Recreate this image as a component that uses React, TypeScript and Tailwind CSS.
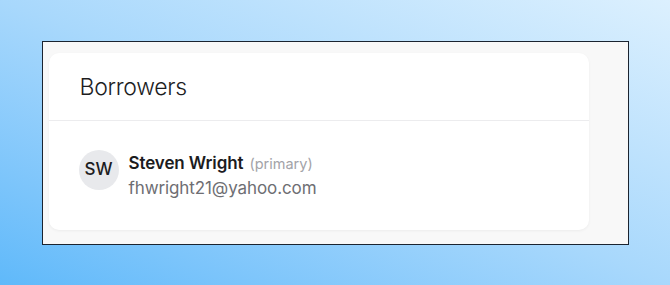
import React from 'react';

const font = { fontFamily: 'Inter, "Noto Sans", sans-serif' };

const BorrowerRow: React.FC<{ initials: string; name: string; email: string; primary?: boolean }> = ({
  initials,
  name,
  email,
  primary,
}) => (
  <div className="flex items-start gap-[10px]">
    <div className="w-10 h-10 rounded-full bg-[#e8e9ec] flex items-center justify-center text-[17px] font-medium text-[#1d1d1f] shrink-0">
      {initials}
    </div>
    <div className="pt-[1px]">
      <div className="flex items-baseline gap-[6px] leading-6">
        <span className="text-[17px] font-semibold text-[#1c1c1e] tracking-[-0.1px]">{name}</span>
        {primary && <span className="text-[14.5px] text-[#a3a3a8]">(primary)</span>}
      </div>
      <div className="text-[17px] leading-6 text-[#6e6e73] tracking-[-0.1px]">{email}</div>
    </div>
  </div>
);

export default function App() {
  return (
    <div
      className="h-[285px] w-full flex items-center justify-center bg-gradient-to-tr from-[#5fb9fa] via-[#a8d8fc] to-[#dcf0fe]"
      style={font}
    >
      <div className="w-[587px] h-[204px] border border-[#1b2430] bg-[#f8f8f8] pt-[11px] pl-[6px]">
        <div className="w-[540px] h-[177px] bg-white rounded-[10px] shadow-[0_1px_3px_rgba(0,0,0,0.05)]">
          <div className="h-[68px] px-[31px] flex items-center border-b border-[#ececee]">
            <h2 className="text-[23px] font-light text-[#1d1d1f] tracking-[-0.3px] pt-[2px]">Borrowers</h2>
          </div>
          <div className="px-[30px] pt-[29px]">
            <BorrowerRow initials="SW" name="Steven Wright" email="fhwright21@yahoo.com" primary />
          </div>
        </div>
      </div>
    </div>
  );
}
